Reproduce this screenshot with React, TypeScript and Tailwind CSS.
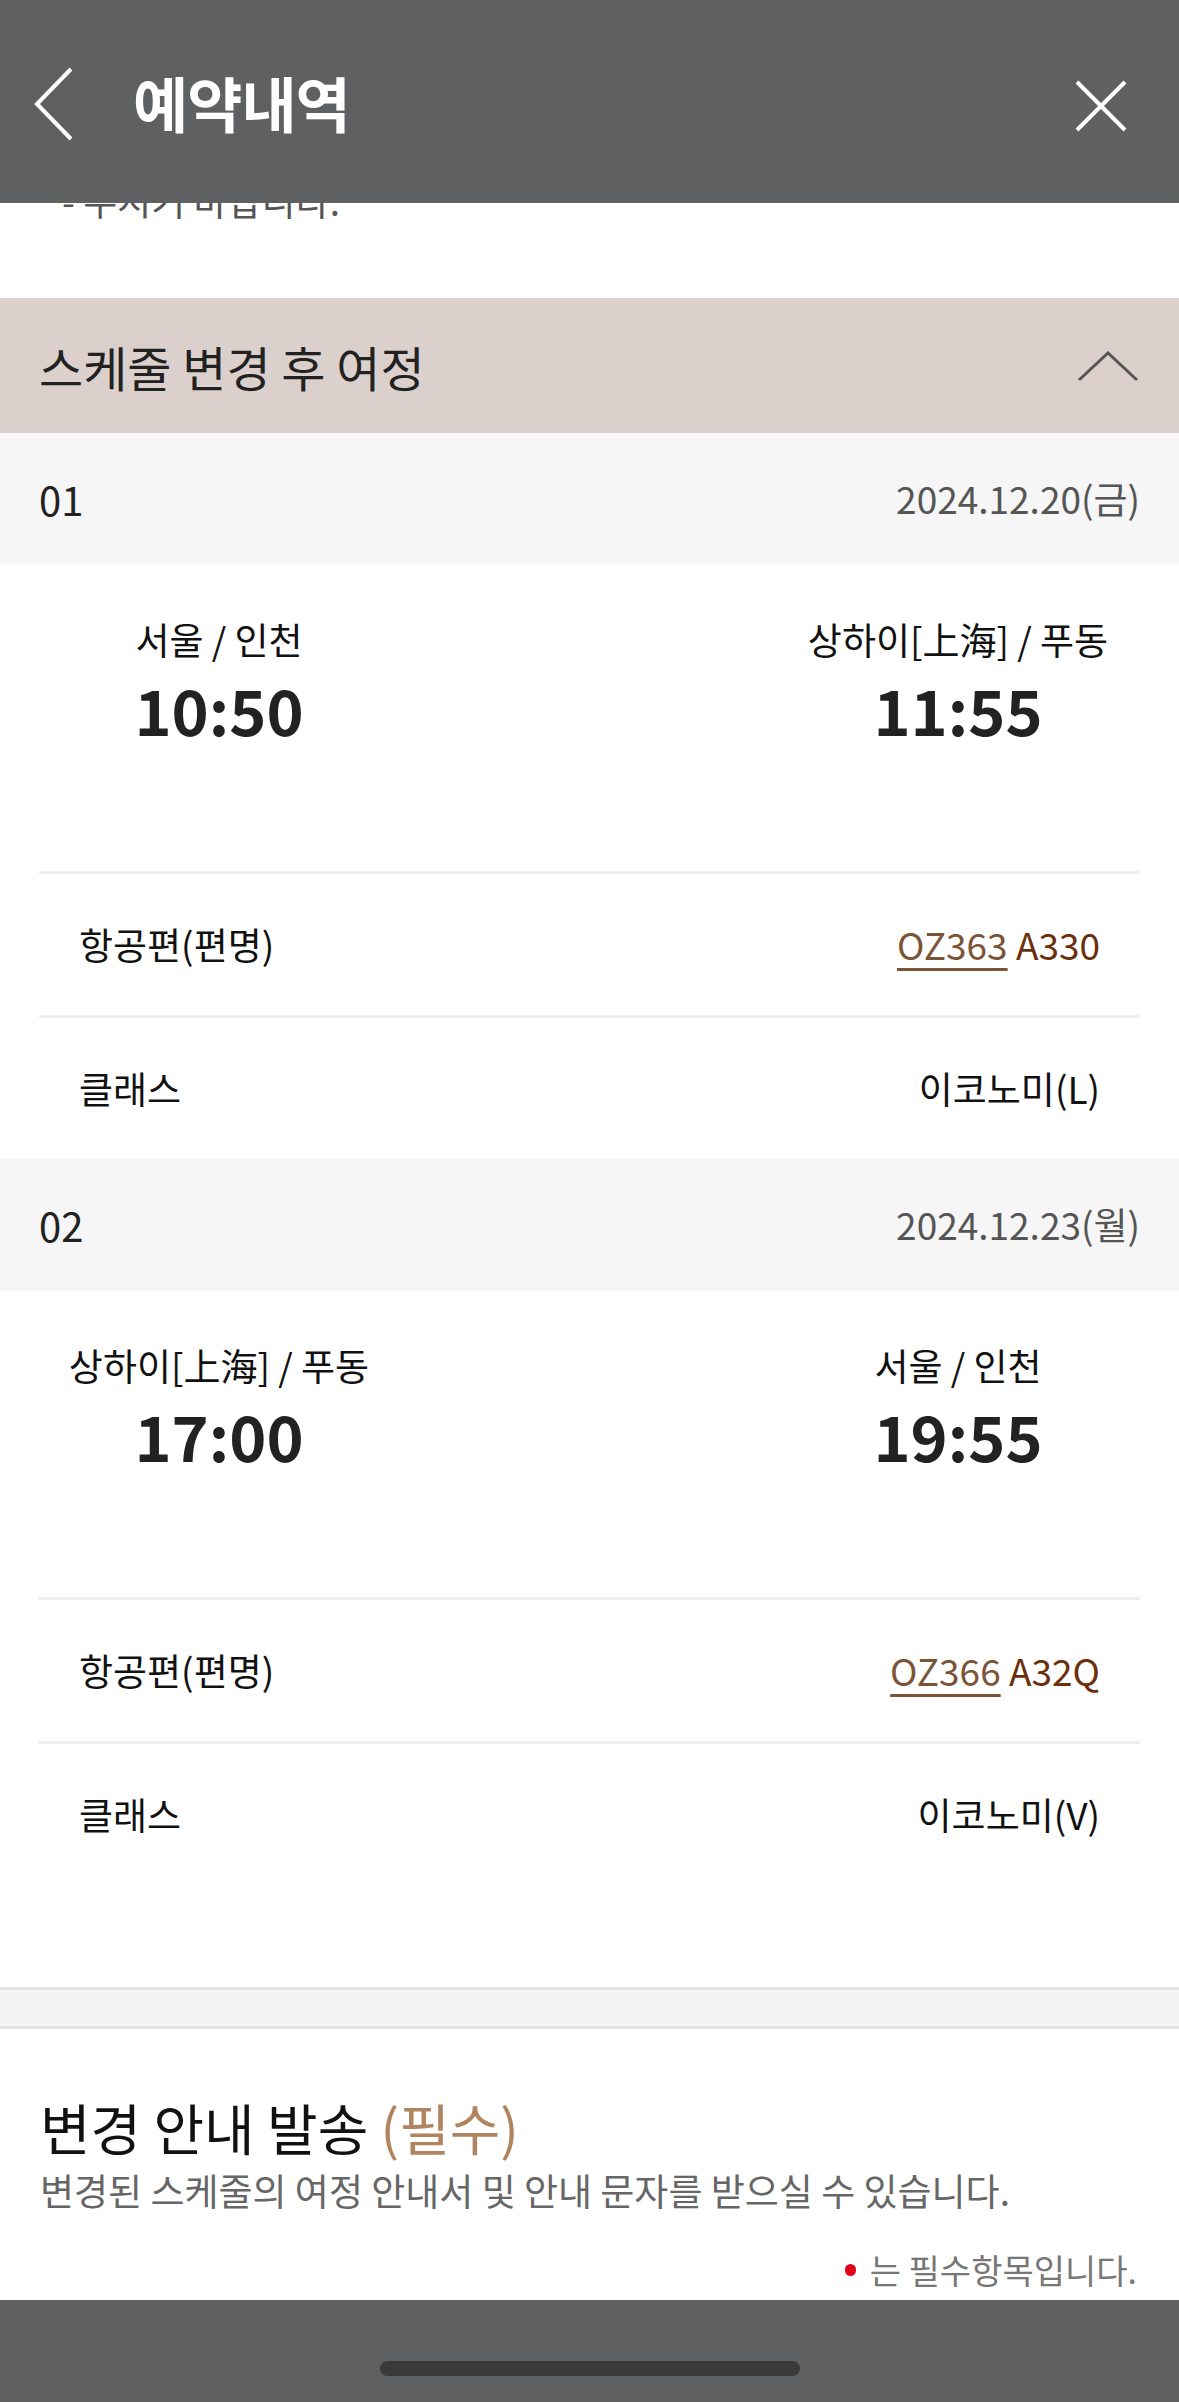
import React from 'react';

const font = { fontFamily: '"Noto Sans CJK KR", "Noto Sans", sans-serif' };

type Leg = {
  no: string;
  date: string;
  from: string;
  fromTime: string;
  to: string;
  toTime: string;
  flight: string;
  aircraft: string;
  cabin: string;
};

const legs: Leg[] = [
  {
    no: '01',
    date: '2024.12.20(금)',
    from: '서울 / 인천',
    fromTime: '10:50',
    to: '상하이[上海] / 푸동',
    toTime: '11:55',
    flight: 'OZ363',
    aircraft: 'A330',
    cabin: '이코노미(L)',
  },
  {
    no: '02',
    date: '2024.12.23(월)',
    from: '상하이[上海] / 푸동',
    fromTime: '17:00',
    to: '서울 / 인천',
    toTime: '19:55',
    flight: 'OZ366',
    aircraft: 'A32Q',
    cabin: '이코노미(V)',
  },
];

function LegBlock({ leg, last }: { leg: Leg; last?: boolean }) {
  return (
    <div>
      <div className="h-[132px] bg-[#f6f6f6] flex items-center justify-between px-[39px]">
        <span className="text-[40px] text-[#222]">{leg.no}</span>
        <span className="text-[37px] text-[#555]">{leg.date}</span>
      </div>
      <div className="px-[39px]">
        <div className="h-[309px] flex justify-between pt-[51px] border-b-[3px] border-[#eeeeee]">
          <div className="w-[360px] flex flex-col items-center">
            <span className="text-[37px] leading-[46px] text-[#111]">{leg.from}</span>
            <span className="text-[63px] leading-[78px] font-bold text-[#222] mt-[8px]">{leg.fromTime}</span>
          </div>
          <div className="w-[364px] flex flex-col items-center">
            <span className="text-[37px] leading-[46px] text-[#111]">{leg.to}</span>
            <span className="text-[63px] leading-[78px] font-bold text-[#222] mt-[8px]">{leg.toTime}</span>
          </div>
        </div>
        <div className="h-[144px] flex items-center justify-between px-[40px] border-b-[3px] border-[#eeeeee]">
          <span className="text-[37px] text-[#111]">항공편(편명)</span>
          <span className="text-[37px]">
            <span className="text-[#7b5436] underline decoration-[3px] underline-offset-[8px]">{leg.flight}</span>
            <span className="text-[#6b2f0c]"> {leg.aircraft}</span>
          </span>
        </div>
        <div className={last ? 'h-[243px] pb-[102px] flex items-center justify-between px-[40px]' : 'h-[141px] flex items-center justify-between px-[40px]'}>
          <span className="text-[37px] text-[#111]">클래스</span>
          <span className="text-[37px] text-[#111]">{leg.cabin}</span>
        </div>
      </div>
    </div>
  );
}

export default function App() {
  return (
    <div className="w-[1179px] h-[2402px] bg-white flex flex-col overflow-hidden" style={font}>
      {/* top bar */}
      <header className="h-[203px] shrink-0 bg-[#5f6062] flex items-center pl-[33px] pr-[52px]">
        <svg width="42" height="74" viewBox="0 0 42 74" fill="none" className="mt-[4px]">
          <path d="M38 2 L4 37 L38 72" stroke="white" strokeWidth="4" />
        </svg>
        <h1 className="ml-[58px] text-[60px] font-bold text-white tracking-[-1px]">예약내역</h1>
        <svg width="52" height="52" viewBox="0 0 52 52" fill="none" className="ml-auto mt-[8px]">
          <path d="M2 2 L50 50 M50 2 L2 50" stroke="white" strokeWidth="4" />
        </svg>
      </header>

      {/* text scrolled under the bar */}
      <div className="h-[95px] shrink-0 overflow-hidden">
        <p className="-mt-[28px] pl-[62px] text-[37px] leading-[50px] text-[#555]">- 주시기 바랍니다.</p>
      </div>

      {/* section title */}
      <div className="h-[135px] shrink-0 bg-[#dbd0cb] flex items-center justify-between pl-[39px] pr-[40px]">
        <h2 className="text-[48px] text-[#222]">스케줄 변경 후 여정</h2>
        <svg width="62" height="32" viewBox="0 0 62 32" fill="none">
          <path d="M2 30 L31 3 L60 30" stroke="#555" strokeWidth="3" />
        </svg>
      </div>

      {legs.map((leg, i) => (
        <LegBlock key={leg.no} leg={leg} last={i === legs.length - 1} />
      ))}

      <div className="h-[42px] shrink-0 bg-[#f4f4f4] border-y-[3px] border-[#e4e4e4]" />

      {/* notice */}
      <div className="flex-1 flex flex-col px-[40px] pt-[63px]">
        <h3 className="text-[55px] leading-[68px] text-[#111]">
          변경 안내 발송 <span className="text-[#b0845f]">(필수)</span>
        </h3>
        <p className="mt-[6px] text-[37px] leading-[48px] text-[#666]">
          변경된 스케줄의 여정 안내서 및 안내 문자를 받으실 수 있습니다.
        </p>
        <div className="mt-[34px] flex items-center justify-end gap-[14px] pr-[2px]">
          <span className="w-[11px] h-[12px] rounded-full bg-[#e0001b]" />
          <span className="text-[34px] leading-[44px] text-[#777]">는 필수항목입니다.</span>
        </div>
      </div>

      {/* bottom bar */}
      <div className="h-[102px] shrink-0 bg-[#5f6062] flex justify-center pt-[61px]">
        <div className="w-[420px] h-[15px] rounded-full bg-[#3a3a3a]" />
      </div>
    </div>
  );
}
